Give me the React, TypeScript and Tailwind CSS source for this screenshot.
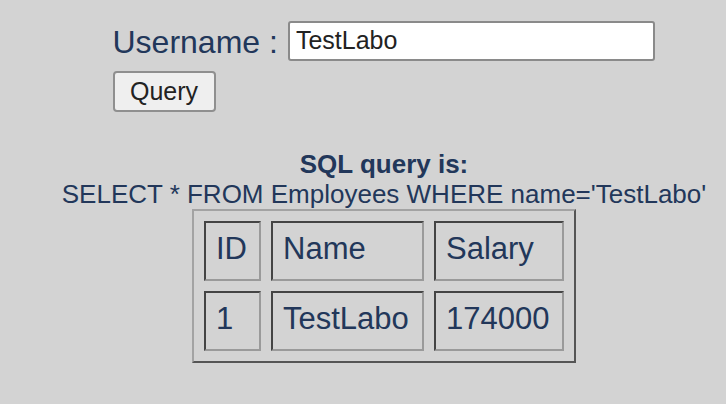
export default function App() {
  const rows = [
    ["ID", "Name", "Salary"],
    ["1", "TestLabo", "174000"],
  ];
  const widths = ["w-[57px]", "w-[153px]", "w-[130px]"];

  return (
    <div className="min-h-screen bg-[#d3d3d3] pl-[42px] pt-[20px] font-['Liberation_Sans',Arial,sans-serif] text-[#22375a]">
      <form className="mx-auto w-[543px]" onSubmit={(e) => e.preventDefault()}>
        <div className="flex items-center gap-[10px]">
          <label className="pt-[4px] text-[32px] leading-[37px]">Username :</label>
          <input
            type="text"
            defaultValue="TestLabo"
            className="h-[40px] w-[367px] rounded-[3px] border-2 border-[#8a8a8a] bg-white px-[6px] text-[25px] text-[#222] outline-none"
          />
        </div>
        <button
          type="submit"
          className="mt-[10px] h-[41px] w-[103px] rounded-[4px] border-2 border-[#8f8f8f] bg-[#efefef] text-[25px] text-[#222]"
        >
          Query
        </button>
      </form>

      <div className="mt-[37px] text-center text-[26px] leading-[30px]">
        <p className="font-bold">SQL query is:</p>
        <p>SELECT * FROM Employees WHERE name='TestLabo'</p>
      </div>

      <table className="mx-auto border-separate border-spacing-[10px] border-2 border-t-[#a3a3a3] border-l-[#a3a3a3] border-b-[#555] border-r-[#555] text-[31px]">
        <tbody>
          {rows.map((row, i) => (
            <tr key={i}>
              {row.map((cell, j) => (
                <td
                  key={j}
                  className={`${widths[j]} h-[60px] border-2 border-t-[#444] border-l-[#444] border-b-[#9a9a9a] border-r-[#9a9a9a] px-[10px] pb-[3px] text-left align-middle`}
                >
                  {cell}
                </td>
              ))}
            </tr>
          ))}
        </tbody>
      </table>
    </div>
  );
}
